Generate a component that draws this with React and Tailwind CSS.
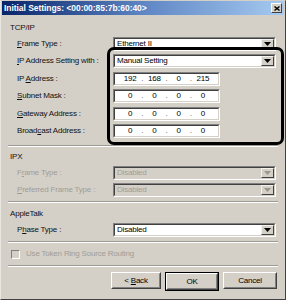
import React from "react";

const font = { fontFamily: '"Liberation Sans", Arial, sans-serif' };

const Sunken = ({ className = "", children }) => (
  <div className={`border border-t-[#808080] border-l-[#808080] border-b-white border-r-white ${className}`}>
    <div className="h-full w-full border border-t-[#404040] border-l-[#404040] border-b-[#d4d0c8] border-r-[#d4d0c8]">
      {children}
    </div>
  </div>
);

const Arrow = ({ disabled }) => (
  <div className="h-full w-[13px] bg-[#d4d0c8] border border-t-[#f4f2ee] border-l-[#f4f2ee] border-b-[#404040] border-r-[#404040] flex items-center justify-center">
    <svg width="7" height="4" viewBox="0 0 7 4">
      <path d="M0 0h7L3.5 4z" fill={disabled ? "#9a978f" : "#000"} />
    </svg>
  </div>
);

const Dropdown = ({ value, disabled }) => (
  <Sunken className="h-[14px] w-[163px] shrink-0">
    <div className={`h-full flex items-center justify-between ${disabled ? "bg-[#d4d0c8]" : "bg-white"}`}>
      <span className={`pl-[2px] ${disabled ? "text-[#a09d96]" : "text-black"}`}>{value}</span>
      <Arrow disabled={disabled} />
    </div>
  </Sunken>
);

const IpField = ({ parts }) => (
  <Sunken className="h-[14px] w-[107px] shrink-0">
    <div className="h-full bg-white flex items-center text-black pl-[6px] pr-[6px]">
      {parts.map((p, i) => (
        <React.Fragment key={i}>
          {i > 0 && <span className="w-[6px] text-center text-[#555]">.</span>}
          <span className="flex-1 text-center">{p}</span>
        </React.Fragment>
      ))}
    </div>
  </Sunken>
);

const Label = ({ pre, u, post, disabled }) => (
  <span className={disabled ? "text-[#a09d96]" : "text-[#111]"}>
    {pre}
    <span className="underline">{u}</span>
    {post}
  </span>
);

const Row = ({ className = "", label, children }) => (
  <div className={`h-[14px] flex items-center ${className}`}>
    <div className="w-[112px] shrink-0 pl-[16px] whitespace-nowrap">{label}</div>
    {children}
  </div>
);

const Separator = ({ className = "" }) => (
  <div className={`mx-[7px] h-[2px] border-t border-t-[#9c9a94] border-b border-b-white ${className}`} />
);

const Button = ({ children, className = "" }) => (
  <div className={`h-[17px] border border-t-white border-l-white border-b-[#404040] border-r-[#404040] ${className}`}>
    <div className="h-full border border-t-[#d4d0c8] border-l-[#d4d0c8] border-b-[#808080] border-r-[#808080] flex items-center justify-center text-black">
      {children}
    </div>
  </div>
);

export default function App() {
  return (
    <div style={font} className="relative w-[286px] h-[300px] bg-[#d4d0c8] text-[8px] tracking-[-0.2px] leading-none border border-t-[#d4d0c8] border-l-[#e8e6e0] border-b-[#404040] border-r-[#404040] overflow-hidden">
      {/* Title bar */}
      <div className="h-[14px] mx-[1px] bg-gradient-to-r from-[#0a246a] via-[#5f86c4] to-[#a6caf0] flex items-center justify-between pl-[2px] pr-[2px]">
        <span className="text-white font-bold text-[8.5px] tracking-[-0.05px] whitespace-nowrap">Initial Settings: &lt;00:00:85:7b:60:40&gt;</span>
        <div className="h-[10px] w-[11px] bg-[#d4d0c8] border border-t-white border-l-white border-b-[#404040] border-r-[#404040] flex items-center justify-center">
          <svg width="6" height="5" viewBox="0 0 6 5">
            <path d="M0.5 0.5l5 4M5.5 0.5l-5 4" stroke="#000" strokeWidth="1.4" />
          </svg>
        </div>
      </div>

      {/* TCP/IP */}
      <div className="h-[14px] mt-[6px] pl-[9px] flex items-center">
        <span className="text-[#111]">TCP/IP</span>
      </div>
      <Row className="mt-[2px]" label={<Label pre="" u="F" post="rame Type :" />}>
        <Dropdown value="Ethernet II" />
      </Row>
      <Row className="mt-[3px]" label={<Label pre="" u="I" post="P Address Setting with :" />}>
        <Dropdown value="Manual Setting" />
      </Row>
      <Row className="mt-[4px]" label={<Label pre="IP " u="A" post="ddress :" />}>
        <IpField parts={["192", "168", "0", "215"]} />
      </Row>
      <Row className="mt-[3px]" label={<Label pre="" u="S" post="ubnet Mask :" />}>
        <IpField parts={["0", "0", "0", "0"]} />
      </Row>
      <Row className="mt-[4px]" label={<Label pre="" u="G" post="ateway Address :" />}>
        <IpField parts={["0", "0", "0", "0"]} />
      </Row>
      <Row className="mt-[3px]" label={<Label pre="Broad" u="c" post="ast Address :" />}>
        <IpField parts={["0", "0", "0", "0"]} />
      </Row>

      <Separator className="mt-[7px]" />

      {/* IPX */}
      <div className="h-[14px] mt-[3px] pl-[9px] flex items-center">
        <span className="text-[#111]">IPX</span>
      </div>
      <Row className="mt-[2px]" label={<Label pre="F" u="r" post="ame Type :" disabled />}>
        <Dropdown value="Disabled" disabled />
      </Row>
      <Row className="mt-[3px]" label={<Label pre="" u="P" post="referred Frame Type :" disabled />}>
        <Dropdown value="Disabled" disabled />
      </Row>

      <Separator className="mt-[4px]" />

      {/* AppleTalk */}
      <div className="h-[14px] mt-[4px] pl-[9px] flex items-center">
        <span className="text-[#111]">AppleTalk</span>
      </div>
      <Row className="mt-[2px]" label={<Label pre="P" u="h" post="ase Type :" />}>
        <Dropdown value="Disabled" />
      </Row>

      <Separator className="mt-[4px]" />

      {/* Checkbox */}
      <div className="h-[14px] mt-[4px] pl-[10px] flex items-center gap-[6px]">
        <div className="w-[9px] h-[9px] bg-[#d4d0c8] border border-t-[#808080] border-l-[#808080] border-b-white border-r-white" />
        <span className="text-[#a09d96]">Use Token Ring Source Routing</span>
      </div>

      <Separator className="mt-[4px]" />

      {/* Buttons */}
      <div className="mt-[5px] flex justify-end gap-[4px] pr-[8px]">
        <Button className="w-[50px]">
          &lt; <span className="underline ml-[2px]">B</span>ack
        </Button>
        <div className="border border-black">
          <Button className="w-[52px] h-[15px]">OK</Button>
        </div>
        <Button className="w-[54px]">Cancel</Button>
      </div>

      {/* Annotation box */}
      <div className="absolute left-[106px] top-[46px] w-[177px] h-[98px] border-[3px] border-black rounded-[7px]" />
    </div>
  );
}
